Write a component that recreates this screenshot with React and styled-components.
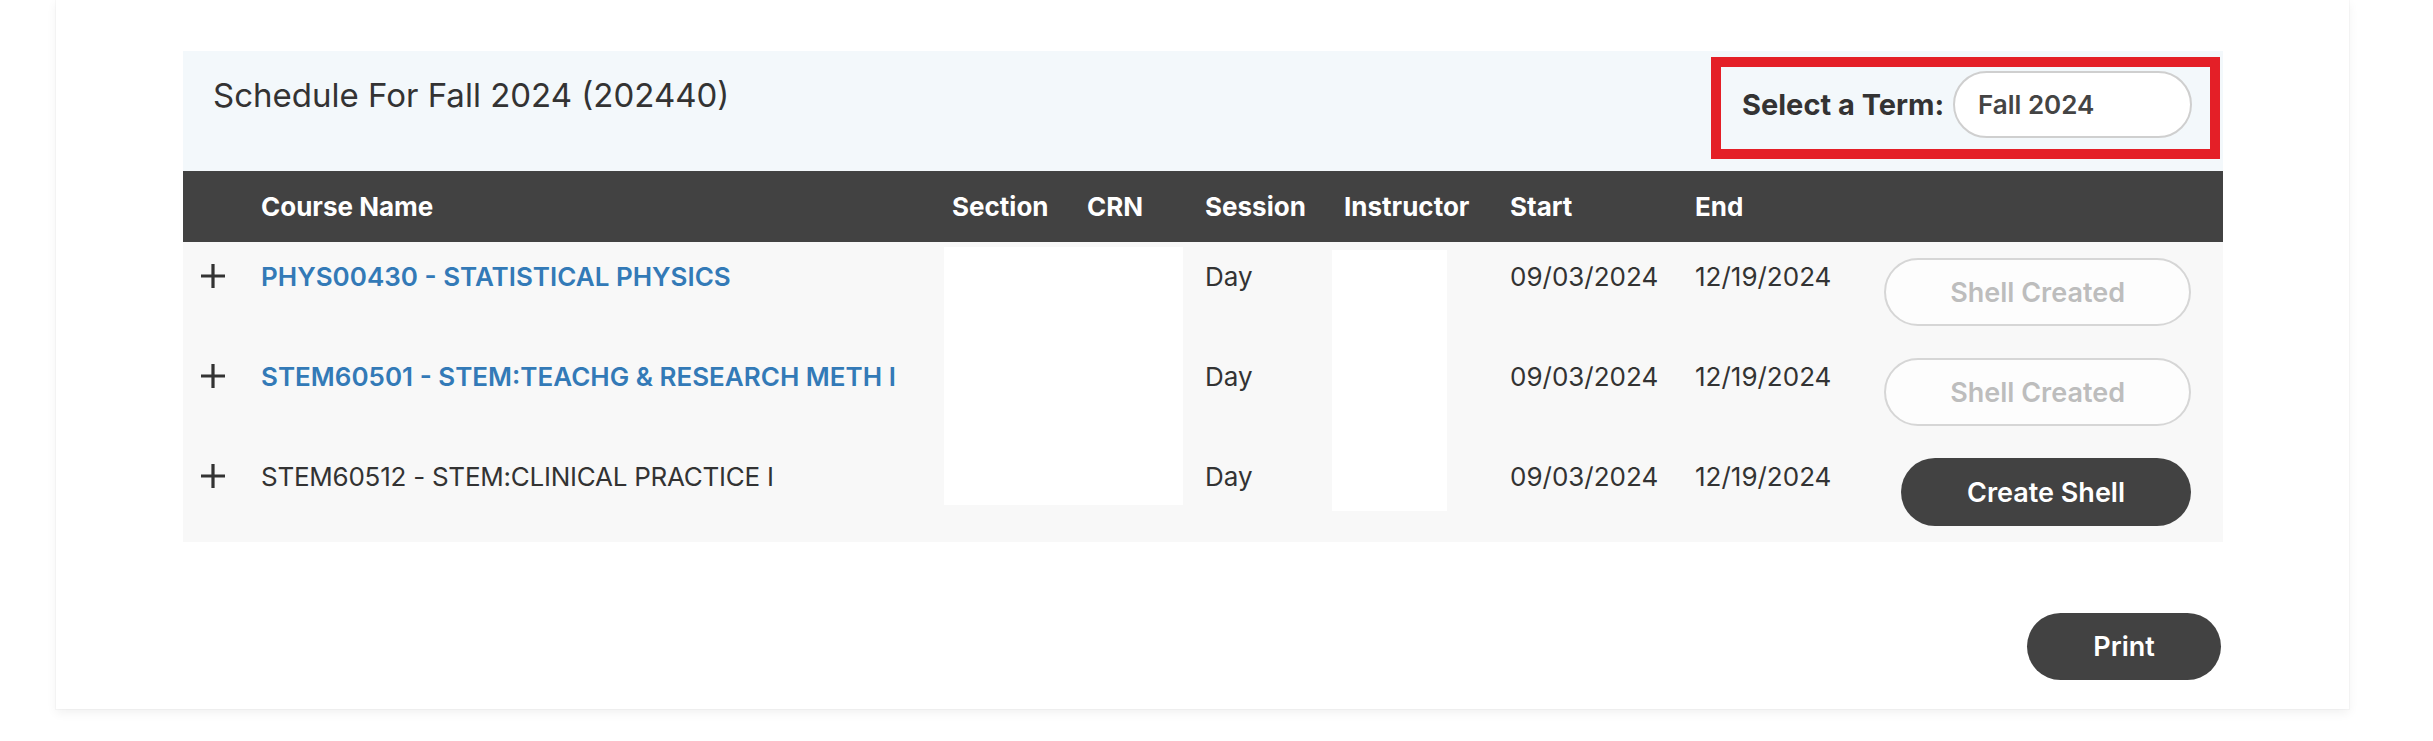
import React from "react";
import styled, { createGlobalStyle } from "styled-components";

const GlobalStyle = createGlobalStyle`
  html, body { margin: 0; padding: 0; background: #ffffff; }
  body { font-family: Inter, "Noto Sans", "Liberation Sans", sans-serif; color: #333; }
  * { box-sizing: border-box; }
`;

const Page = styled.div`
  width: 2433px;
  height: 741px;
  padding-left: 56px;
  overflow: hidden;
`;

const Card = styled.div`
  width: 2293px;
  background: #fff;
  padding: 51px 126px 29px 127px;
  box-shadow: 0 4px 10px rgba(0, 0, 0, 0.06), 0 0 0 1px rgba(0, 0, 0, 0.025);
  display: flex;
  flex-direction: column;
`;

const Panel = styled.div`
  display: flex;
  flex-direction: column;
`;

const TitleBar = styled.div`
  height: 120px;
  background: #f3f8fb;
  display: flex;
  justify-content: space-between;
  align-items: flex-start;
  padding: 0 3px 0 30px;
`;

const Title = styled.h2`
  margin: 0;
  padding-top: 24px;
  font-size: 33px;
  line-height: 40px;
  font-weight: 400;
  color: #333;
`;

const TermBox = styled.div`
  margin-top: 6px;
  width: 509px;
  border: 10px solid #e41f27;
  padding: 4px 18px 11px 21px;
  display: flex;
  align-items: center;
  justify-content: space-between;
`;

const TermLabel = styled.label`
  font-size: 29px;
  font-weight: 700;
  color: #333;
  white-space: nowrap;
`;

const TermSelect = styled.div`
  width: 239px;
  height: 67px;
  border: 2px solid #cfcfcf;
  border-radius: 34px;
  background: #fff;
  display: flex;
  align-items: center;
  padding-left: 23px;
  font-size: 26px;
  font-weight: 600;
  color: #444;
`;

const columns = "78px 691px 135px 118px 139px 166px 185px 1fr auto";

const HeadRow = styled.div`
  height: 71px;
  background: #424242;
  display: grid;
  grid-template-columns: ${columns};
  align-items: center;
  color: #fff;
  font-size: 26px;
  font-weight: 700;
`;

const HeadCell = styled.div`
  white-space: nowrap;
`;

const Body = styled.div`
  position: relative;
  background: #f8f8f8;
`;

const Row = styled.div`
  display: grid;
  grid-template-columns: ${columns};
  align-items: start;
  padding: 16px 0;
  font-size: 26px;
`;

const Cell = styled.div`
  line-height: 38px;
  white-space: nowrap;
  color: #333;
`;

const PlusCell = styled.div`
  padding: 5px 0 0 17px;
  height: 38px;
  color: #333;
`;

const CourseName = styled.div`
  line-height: 38px;
  white-space: nowrap;
  font-weight: ${(p) => (p.$link ? 600 : 400)};
  letter-spacing: ${(p) => (p.$link ? "0" : "-0.25px")};
  color: ${(p) => (p.$link ? "#337ab7" : "#333")};
`;

const ActionCell = styled.div`
  display: flex;
  justify-content: flex-end;
  padding-right: 32px;
`;

const PillButton = styled.button`
  height: 68px;
  border-radius: 34px;
  padding: 0 ${(p) => (p.$done ? 64 : 66)}px;
  font-family: inherit;
  font-size: 27px;
  font-weight: 600;
  white-space: nowrap;
  cursor: pointer;
  border: ${(p) => (p.$done ? "2px solid #d6d6d6" : "none")};
  background: ${(p) => (p.$done ? "#fdfdfd" : "#424242")};
  color: ${(p) => (p.$done ? "#bdbdbd" : "#fff")};
`;

const Redaction = styled.div`
  position: absolute;
  background: #fff;
  left: ${(p) => p.$left}px;
  top: ${(p) => p.$top}px;
  width: ${(p) => p.$w}px;
  height: ${(p) => p.$h}px;
`;

const Footer = styled.div`
  display: flex;
  justify-content: flex-end;
  padding-top: 71px;
  padding-right: 2px;
`;

const PrintButton = styled.button`
  height: 67px;
  width: 194px;
  border-radius: 34px;
  border: none;
  background: #424242;
  color: #fff;
  font-family: inherit;
  font-size: 27px;
  font-weight: 600;
  cursor: pointer;
`;

const PlusIcon = () => (
  <svg width="26" height="26" viewBox="0 0 26 26">
    <path d="M13 1v24M1 13h24" stroke="#333" strokeWidth="3.2" fill="none" />
  </svg>
);

const courses = [
  { name: "PHYS00430 - STATISTICAL PHYSICS", link: true, created: true },
  { name: "STEM60501 - STEM:TEACHG & RESEARCH METH I", link: true, created: true },
  { name: "STEM60512 - STEM:CLINICAL PRACTICE I", link: false, created: false },
];

export default function App() {
  return (
    <>
      <GlobalStyle />
      <Page>
        <Card>
          <Panel>
            <TitleBar>
              <Title>Schedule For Fall 2024 (202440)</Title>
              <TermBox>
                <TermLabel>Select a Term:</TermLabel>
                <TermSelect>Fall 2024</TermSelect>
              </TermBox>
            </TitleBar>
            <HeadRow>
              <HeadCell />
              <HeadCell>Course Name</HeadCell>
              <HeadCell>Section</HeadCell>
              <HeadCell>CRN</HeadCell>
              <HeadCell>Session</HeadCell>
              <HeadCell>Instructor</HeadCell>
              <HeadCell>Start</HeadCell>
              <HeadCell>End</HeadCell>
              <HeadCell />
            </HeadRow>
            <Body>
              {courses.map((c) => (
                <Row key={c.name}>
                  <PlusCell>
                    <PlusIcon />
                  </PlusCell>
                  <CourseName $link={c.link}>{c.name}</CourseName>
                  <Cell />
                  <Cell />
                  <Cell>Day</Cell>
                  <Cell />
                  <Cell>09/03/2024</Cell>
                  <Cell>12/19/2024</Cell>
                  <ActionCell>
                    <PillButton $done={c.created}>
                      {c.created ? "Shell Created" : "Create Shell"}
                    </PillButton>
                  </ActionCell>
                </Row>
              ))}
              <Redaction $left={761} $top={5} $w={239} $h={258} />
              <Redaction $left={1149} $top={8} $w={115} $h={261} />
            </Body>
          </Panel>
          <Footer>
            <PrintButton>Print</PrintButton>
          </Footer>
        </Card>
      </Page>
    </>
  );
}
